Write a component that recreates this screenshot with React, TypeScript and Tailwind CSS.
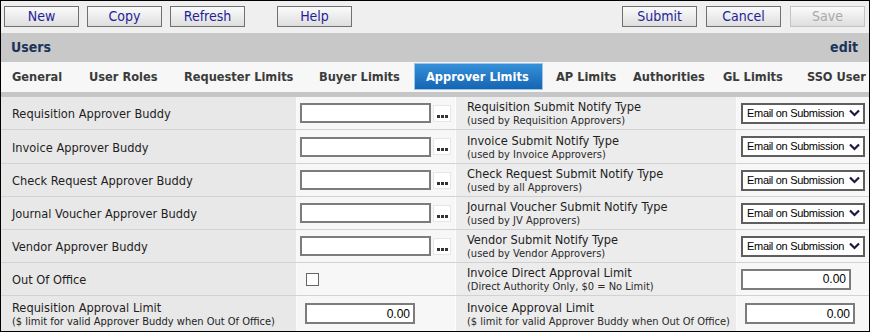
import React from "react";

const FONT = "font-['DejaVu_Sans_Condensed','DejaVu_Sans',sans-serif]";

function Btn({ label, disabled }: { label: string; disabled?: boolean }) {
  return (
    <div
      className={`w-[75px] h-[21px] flex items-center justify-center border text-[14px] bg-gradient-to-b from-[#fbfbfb] to-[#dedede] ${
        disabled ? "border-[#c4c4c4] text-[#a8a8a8]" : "border-[#707070] text-[#1f1f99]"
      }`}
    >
      {label}
    </div>
  );
}

function TextBox() {
  return (
    <div className="flex items-center">
      <div className="w-[131px] h-[20px] bg-white border-2 border-[#7c7c7c]" />
      <div className="ml-[2px] w-[18px] h-[17px] border border-[#e6e6e6] bg-white flex items-end justify-center pb-[3px] gap-[1px]">
        <span className="w-[3px] h-[3px] bg-[#333]" />
        <span className="w-[3px] h-[3px] bg-[#333]" />
        <span className="w-[3px] h-[3px] bg-[#333]" />
      </div>
    </div>
  );
}

function Select() {
  return (
    <div className="w-[124px] h-[21px] border-2 border-[#5e5e5e] bg-white flex items-center pl-[4px] pr-[3px] justify-between whitespace-nowrap font-['Liberation_Sans',sans-serif] text-[11px] tracking-[-0.3px] text-black">
      <span>Email on Submission</span>
      <svg width="11" height="8" viewBox="0 0 11 8" className="shrink-0">
        <polyline points="1,1.5 5.5,6 10,1.5" fill="none" stroke="#1a1a40" strokeWidth="2.2" />
      </svg>
    </div>
  );
}

function Amount({ w = 110 }: { w?: number }) {
  return (
    <div
      className="h-[21px] border-2 border-[#7c7c7c] bg-white flex items-center justify-end pr-[3px] font-['Liberation_Sans',sans-serif] text-[12px] text-black"
      style={{ width: w }}
    >
      0.00
    </div>
  );
}

type Row = {
  left: string;
  leftSub?: string;
  field: React.ReactNode;
  right: string;
  rightSub: string;
  rfield: React.ReactNode;
  h: number;
};

const rows: Row[] = [
  { left: "Requisition Approver Buddy", field: <TextBox />, right: "Requisition Submit Notify Type", rightSub: "(used by Requisition Approvers)", rfield: <Select />, h: 33 },
  { left: "Invoice Approver Buddy", field: <TextBox />, right: "Invoice Submit Notify Type", rightSub: "(used by Invoice Approvers)", rfield: <Select />, h: 34 },
  { left: "Check Request Approver Buddy", field: <TextBox />, right: "Check Request Submit Notify Type", rightSub: "(used by all Approvers)", rfield: <Select />, h: 33 },
  { left: "Journal Voucher Approver Buddy", field: <TextBox />, right: "Journal Voucher Submit Notify Type", rightSub: "(used by JV Approvers)", rfield: <Select />, h: 33 },
  { left: "Vendor Approver Buddy", field: <TextBox />, right: "Vendor Submit Notify Type", rightSub: "(used by Vendor Approvers)", rfield: <Select />, h: 33 },
  {
    left: "Out Of Office",
    field: <div className="ml-[6px] w-[13px] h-[13px] border border-[#666] bg-white" />,
    right: "Invoice Direct Approval Limit",
    rightSub: "(Direct Authority Only, $0 = No Limit)",
    rfield: <Amount />,
    h: 33,
  },
  {
    left: "Requisition Approval Limit",
    leftSub: "($ limit for valid Approver Buddy when Out Of Office)",
    field: <div className="ml-[5px]"><Amount /></div>,
    right: "Invoice Approval Limit",
    rightSub: "($ limit for valid Approver Buddy when Out Of Office)",
    rfield: <div className="ml-[4px]"><Amount /></div>,
    h: 35,
  },
];

const tabs: { t: string; cls: string }[] = [
  { t: "General", cls: "w-[77px]" },
  { t: "User Roles", cls: "w-[95px]" },
  { t: "Requester Limits", cls: "w-[135px]" },
  { t: "Buyer Limits", cls: "w-[95px]" },
  { t: "Approver Limits", cls: "" },
  { t: "AP Limits", cls: "ml-[13px] w-[77px]" },
  { t: "Authorities", cls: "w-[90px]" },
  { t: "GL Limits", cls: "w-[84px]" },
  { t: "SSO User", cls: "w-[70px]" },
];

export default function App() {
  return (
    <div className={`w-[870px] h-[332px] border border-black overflow-hidden flex flex-col bg-[#efefef] ${FONT}`}>
      {/* toolbar */}
      <div className="h-[32px] shrink-0 flex items-start pt-[5px] pl-[3px] pr-[4px]">
        <div className="flex gap-[8px]">
          <Btn label="New" />
          <Btn label="Copy" />
          <Btn label="Refresh" />
        </div>
        <div className="ml-[32px]">
          <Btn label="Help" />
        </div>
        <div className="ml-auto flex gap-[9px]">
          <Btn label="Submit" />
          <Btn label="Cancel" />
          <Btn label="Save" disabled />
        </div>
      </div>
      {/* header */}
      <div className="h-[29px] shrink-0 bg-[#c8c8c8] flex items-center justify-between px-[10px] pr-[11px] text-[14px] font-bold text-[#1b3459]">
        <span>Users</span>
        <span>edit</span>
      </div>
      {/* tabs */}
      <div className="h-[30px] shrink-0 bg-[#f7f7f7] flex items-stretch whitespace-nowrap pl-[11px] text-[12.7px] font-bold text-[#3b3b3b]">
        {tabs.map(({ t, cls }) => (
          <div
            key={t}
            className={
              t === "Approver Limits"
                ? "mt-[1px] mb-[2px] w-[129px] pl-[11px] flex items-center shrink-0 bg-gradient-to-b from-[#3590d9] to-[#1565b3] text-white border border-[#9ec4e6]"
                : `${cls} shrink-0 flex items-center`
            }
          >
            {t}
          </div>
        ))}
      </div>
      <div className="h-[5px] shrink-0 bg-[#c6c6c6]" />
      {/* content */}
      <div className="flex-1 flex flex-col">
        {rows.map((r, i) => (
          <div
            key={i}
            className={`flex shrink-0 ${i < rows.length - 1 ? "border-b border-[#d2d2d2]" : ""}`}
            style={{ height: r.h }}
          >
            <div className="w-[296px] bg-[#e8e8e8] flex flex-col justify-center pl-[11px] pt-[1px] whitespace-nowrap text-[#1e1e1e] border-r border-[#fafafa]">
              <div className="text-[12.7px] leading-[15px]">{r.left}</div>
              {r.leftSub && <div className="text-[11px] leading-[13px]">{r.leftSub}</div>}
            </div>
            <div className="w-[159px] bg-[#f7f7f7] flex items-center pl-[3px] border-r border-[#fdfdfd]">{r.field}</div>
            <div className="w-[281px] bg-[#ececec] flex flex-col justify-center pl-[11px] whitespace-nowrap text-[#1e1e1e] border-r border-[#fafafa]">
              <div className="text-[12.7px] leading-[15px]">{r.right}</div>
              <div className="text-[11px] leading-[13px] text-[#2a2a2a]">{r.rightSub}</div>
            </div>
            <div className="flex-1 bg-[#f7f7f7] flex items-center pl-[4px]">{r.rfield}</div>
          </div>
        ))}
      </div>
    </div>
  );
}
